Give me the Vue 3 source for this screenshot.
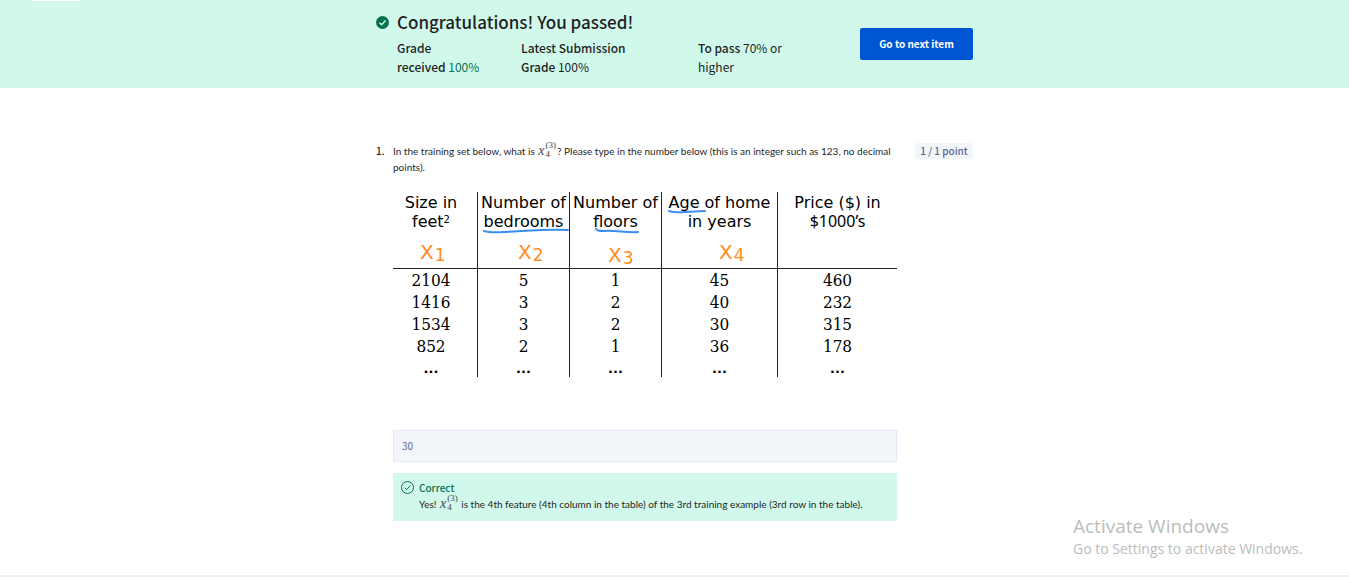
<script setup>
import { ref } from 'vue'

const answer = ref('30')
const rows = [
  ['2104', '5', '1', '45', '460'],
  ['1416', '3', '2', '40', '232'],
  ['1534', '3', '2', '30', '315'],
  ['852', '2', '1', '36', '178'],
]
const marks = [
  { n: 1, x: 27, y: 67 },
  { n: 2, x: 125, y: 67 },
  { n: 3, x: 215, y: 70 },
  { n: 4, x: 326, y: 67 },
]
</script>

<template>
  <div class="page">
    <header class="banner">
      <div class="tab-mark"></div>
      <div class="wrap banner-row">
        <svg class="pass-icon" viewBox="0 0 12 12" aria-hidden="true">
          <circle cx="6" cy="6" r="6" fill="#087051" />
          <path d="M3.2 6.2l2 1.9 3.6-3.9" fill="none" stroke="#d0f9ec" stroke-width="1.3" />
        </svg>
        <div class="result">
          <h1>Congratulations! You passed!</h1>
          <div class="stats">
            <p><b>Grade<br />received</b> <span class="green">100%</span></p>
            <p><b>Latest Submission<br />Grade</b> 100%</p>
            <p><b>To pass</b> 70% or<br />higher</p>
          </div>
        </div>
        <button type="button" class="next">Go to next item</button>
      </div>
    </header>

    <main class="wrap question">
      <span class="number">1.</span>
      <div class="content">
        <label class="prompt" for="answer">In the training set below, what is <span class="math"><i>x</i><span class="scripts"><span>(3)</span><span>4</span></span></span>? Please type in the number below (this is an integer such as 123, no decimal points).</label>

        <div class="figure">
          <table>
            <colgroup>
              <col class="c1" /><col class="c2" /><col class="c3" /><col class="c4" /><col class="c5" />
            </colgroup>
            <thead>
              <tr>
                <th>Size in<br />feet<span class="square">2</span></th>
                <th>Number of<br />bedrooms</th>
                <th>Number of<br />floors</th>
                <th>Age of home<br />in years</th>
                <th>Price ($) in<br /><span class="unit">$1000’s</span></th>
              </tr>
            </thead>
            <tbody>
              <tr v-for="row in rows" :key="row[0]">
                <td v-for="(cell, i) in row" :key="i">{{ cell }}</td>
              </tr>
              <tr class="more">
                <td v-for="i in 5" :key="i">...</td>
              </tr>
            </tbody>
          </table>
          <svg class="ink" viewBox="0 0 504 185">
            <g fill="none" stroke="#3b8df0" stroke-width="2" stroke-linecap="round">
              <path d="M91 39q6 2 20 1c22-1 40-3 64-2" />
              <path d="M203 37q1 2 8 2c12-1 22 2 34 1" />
              <path d="M276 19q6 2 16 1l20-1" />
            </g>
            <g class="marks">
              <text v-for="m in marks" :key="m.n" :x="m.x" :y="m.y">X<tspan class="index" dx="1" dy="2">{{ m.n }}</tspan></text>
            </g>
          </svg>
        </div>

        <input id="answer" v-model="answer" type="text" />

        <section class="feedback">
          <svg class="ok-icon" viewBox="0 0 13 13" aria-hidden="true">
            <circle cx="6.5" cy="6.5" r="6" fill="none" stroke="#087051" />
            <path d="M3.8 6.8l2 1.8 3.4-4" fill="none" stroke="#087051" />
          </svg>
          <div>
            <strong>Correct</strong>
            <p>Yes! <span class="math"><i>x</i><span class="scripts"><span>(3)</span><span>4</span></span></span> is the 4th feature (4th column in the table) of the 3rd training example (3rd row in the table).</p>
          </div>
        </section>
      </div>
      <span class="points">1 / 1 point</span>
    </main>

    <aside class="watermark">
      <div class="big">Activate Windows</div>
      <div>Go to Settings to activate Windows.</div>
    </aside>
  </div>
</template>

<style>
body {
  margin: 0;
}
</style>

<style scoped>
* {
  box-sizing: border-box;
}
.page {
  position: relative;
  min-height: 100vh;
  border-bottom: 2px solid #efefef;
  background: #fff;
  color: #1f1f1f;
  font-family: "Noto Sans CJK SC", "Noto Sans", sans-serif;
  font-size: 10px;
  line-height: 16px;
}
h1,
p {
  margin: 0;
}
.wrap {
  max-width: 597px;
  margin: 0 auto;
}
.banner {
  position: relative;
  background: #d0f9ec;
}
.tab-mark {
  position: absolute;
  top: 0;
  left: 32px;
  width: 48px;
  height: 1px;
  background: #fff;
}
.banner-row {
  display: flex;
  align-items: flex-start;
  padding: 10px 0 12px;
}
.pass-icon {
  flex: none;
  width: 13px;
  height: 13px;
  margin: 6px 8px 0 0;
}
.result {
  flex: 1;
}
h1 {
  font-size: 17px;
  font-weight: 500;
  line-height: 24px;
  margin-bottom: 4px;
}
.stats {
  display: grid;
  grid-template-columns: 124px 177px 1fr;
  font-size: 12px;
  line-height: 19px;
}
.stats b {
  font-weight: 500;
}
.green {
  color: #087051;
}
.next {
  flex: none;
  width: 113px;
  height: 32px;
  margin-top: 18px;
  padding: 0 0 2px;
  border: 0;
  border-radius: 2px;
  background: #0056d2;
  color: #fff;
  font: bold 10px "Noto Sans CJK SC", sans-serif;
}
.question {
  display: flex;
  align-items: flex-start;
  padding-top: 55px;
}
.number {
  flex: none;
  width: 17px;
  font-weight: 500;
}
.content {
  flex: 1;
  min-width: 0;
}
.points {
  flex: none;
  width: 58px;
  margin-left: 18px;
  border-radius: 2px;
  background: #f2f5fa;
  color: #5b6790;
  font-weight: 500;
  text-align: center;
}
.prompt {
  display: block;
}
.prompt,
.feedback p {
  font-family: Lato, "Noto Sans", sans-serif;
}
.math {
  display: inline-flex;
  gap: 1px;
  height: 16px;
  padding: 0 1px;
  vertical-align: top;
  font-family: "Liberation Serif", serif;
  color: #444;
}
.math i {
  font-size: 14px;
}
.scripts {
  display: flex;
  flex-direction: column;
  margin-top: -2px;
  font-size: 9px;
  line-height: 9px;
}
.figure {
  position: relative;
  margin: 17px 0 53px;
}
table {
  width: 100%;
  table-layout: fixed;
  border-collapse: separate;
  border-spacing: 0;
  color: #000;
  text-align: center;
}
.c1 {
  width: 85px;
}
.c2,
.c3 {
  width: 92px;
}
.c4 {
  width: 116px;
}
th {
  height: 77px;
  padding: 1px 0 0;
  border-bottom: 1px solid #222;
  vertical-align: top;
  font: 16px/19px "DejaVu Sans", sans-serif;
  white-space: nowrap;
}
td {
  height: 22px;
  padding: 0;
  font: 17px/22px "DejaVu Serif Condensed", "DejaVu Serif", serif;
}
th:not(:last-child),
td:not(:last-child) {
  border-right: 1px solid #222;
}
th:first-child,
td:first-child {
  padding-right: 8px;
}
.square {
  font-size: 10px;
  vertical-align: 4px;
  line-height: 10px;
}
.unit {
  font-family: "Noto Sans", sans-serif;
  line-height: 16px;
}
.more td {
  height: 20px;
  padding-top: 4px;
  font: bold 13px/16px "DejaVu Sans", sans-serif;
}
.ink {
  position: absolute;
  inset: 0;
  width: 100%;
  height: 100%;
}
.marks {
  fill: #ff8a1c;
  font: 20px "DejaVu Sans", sans-serif;
}
.index {
  font-size: 17px;
}
input {
  display: block;
  width: 100%;
  height: 32px;
  padding: 0 8px 2px;
  border: 1px solid #e3e9f6;
  background: #f2f5fa;
  color: #5b6790;
  font: 10px "Noto Sans CJK SC", sans-serif;
}
.feedback {
  display: flex;
  margin-top: 11px;
  padding: 7px 8px 9px;
  background: #d0f9ec;
}
.ok-icon {
  flex: none;
  width: 13px;
  height: 13px;
  margin: 1px 5px 0 0;
}
.feedback strong {
  display: block;
  color: #087051;
  font-weight: 500;
}
.watermark {
  position: absolute;
  left: 1073px;
  bottom: 16px;
  color: #bcbcbc;
  font: 14px/20px "Open Sans", sans-serif;
  white-space: nowrap;
}
.big {
  font-size: 19px;
  line-height: 26px;
}
</style>
